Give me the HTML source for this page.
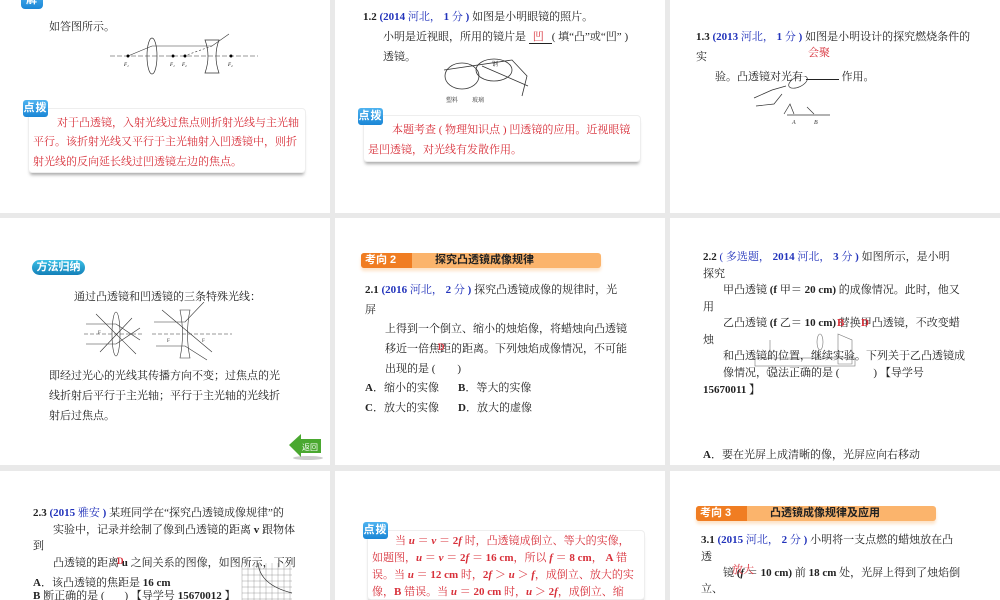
<!DOCTYPE html>
<html style="overflow:hidden;height:600px"><head><meta charset="utf-8"><style>
body{margin:0;width:1000px;height:600px;background:#e9e9e9;position:relative;overflow:hidden;font-family:"Liberation Serif","Noto Serif CJK SC",serif;color:#222}
.p{position:absolute;background:#fff;overflow:hidden}
.t{position:absolute;font-size:11px;line-height:13px;white-space:nowrap}
.b{color:#2233bb}
.r{color:#d8303a}
.k{font-weight:bold}
.badge{position:absolute;background:linear-gradient(#4fb3f0,#1a86d6);color:#fff;font-family:"Liberation Sans","Noto Sans CJK SC",sans-serif;font-weight:bold;font-size:11px;line-height:17px;text-align:center;border-radius:3px;letter-spacing:1px}
.box{position:absolute;border:1px solid #eee;border-radius:4px;background:#fff;box-shadow:0 4px 3px -2px #aaa}
.hd{position:absolute;height:15px;background:#fbb46c;border-radius:3px;box-shadow:0 3px 3px #fde3c8}
.hd .l{position:absolute;left:0;top:0;width:51px;height:15px;background:#f07d22;border-radius:3px 0 0 3px;color:#fff;font:bold 11px/15px "Liberation Sans","Noto Sans CJK SC",sans-serif;padding-left:4px;box-sizing:border-box}
.hd .c{position:absolute;top:0;font:bold 11px/15px "Liberation Sans","Noto Sans CJK SC",sans-serif;color:#222}
</style></head><body>
<div class="p" style="left:0;top:0;width:330px;height:213px"></div>
<div class="p" style="left:335px;top:0;width:330px;height:213px"></div>
<div class="p" style="left:670px;top:0;width:330px;height:213px"></div>
<div class="p" style="left:0;top:218px;width:330px;height:247px"></div>
<div class="p" style="left:335px;top:218px;width:330px;height:247px"></div>
<div class="p" style="left:670px;top:218px;width:330px;height:247px"></div>
<div class="p" style="left:0;top:471px;width:330px;height:129px"></div>
<div class="p" style="left:335px;top:471px;width:330px;height:129px"></div>
<div class="p" style="left:670px;top:471px;width:330px;height:129px"></div>

<!-- Panel 1 -->
<div class="badge" style="left:21px;top:-8px;width:22px;height:17px;border-radius:4px">解</div>
<div class="t" style="left:49px;top:21px">如答图所示。</div>
<svg style="position:absolute;left:108px;top:32px" width="152" height="44">
<line x1="2" y1="24" x2="150" y2="24" stroke="#333" stroke-width=".6" stroke-dasharray="5,2"/>
<ellipse cx="44" cy="24" rx="5" ry="18" fill="none" stroke="#333" stroke-width=".7"/>
<path d="M97 8 h14 q-6 16 0 33 h-14 q6-17 0-33z" fill="none" stroke="#333" stroke-width=".7"/>
<path d="M20 24 L44 14 L104 14 L121 2" fill="none" stroke="#333" stroke-width=".6"/>
<line x1="76" y1="24" x2="104" y2="14" stroke="#333" stroke-width=".6" stroke-dasharray="2,2"/>
<circle cx="20" cy="24" r="1.5"/><circle cx="65" cy="24" r="1.5"/><circle cx="77" cy="24" r="1.5"/><circle cx="123" cy="24" r="1.5"/>
<text x="16" y="34" font-size="5" font-style="italic">F₁</text><text x="62" y="34" font-size="5" font-style="italic">F₁</text><text x="74" y="34" font-size="5" font-style="italic">F₂</text><text x="120" y="34" font-size="5" font-style="italic">F₂</text>
</svg>
<div class="box" style="left:28px;top:108px;width:276px;height:63px"></div>
<div class="badge" style="left:23px;top:100px;width:25px">点拨</div>
<div class="t r" style="left:57px;top:117px">对于凸透镜，入射光线过焦点则折射光线与主光轴</div>
<div class="t r" style="left:33px;top:136px">平行。该折射光线又平行于主光轴射入凹透镜中，则折</div>
<div class="t r" style="left:33px;top:156px">射光线的反向延长线过凹透镜左边的焦点。</div>

<!-- Panel 2 -->
<div class="t" style="left:363px;top:11px"><span class="k">1.2</span> <span class="b k">(2014</span> <span class="b">河北，</span> <span class="b k">1</span> <span class="b">分</span> <span class="b k">)</span> 如图是小明眼镜的照片。</div>
<div class="t" style="left:383px;top:31px">小明是近视眼，所用的镜片是 <span class="r" style="border-bottom:1px solid #222;padding:0 8px 0 4px">凹</span>( 填“凸”或“凹” )</div>
<div class="t" style="left:383px;top:51px">透镜。</div>
<svg style="position:absolute;left:442px;top:56px" width="88" height="50" stroke="#333" fill="none" stroke-width=".8">
<ellipse cx="20" cy="20" rx="17" ry="13"/><ellipse cx="52" cy="14" rx="18" ry="11"/>
<path d="M2 14 L70 4 L85 20 L80 40 M40 10 L86 30"/>
<text x="50" y="10" font-size="6" fill="#333" stroke="none">钢</text>
<text x="4" y="46" font-size="6" fill="#333" stroke="none">塑料</text><text x="30" y="46" font-size="6" fill="#333" stroke="none">玻璃</text>
</svg>
<div class="box" style="left:363px;top:115px;width:276px;height:45px"></div>
<div class="badge" style="left:358px;top:108px;width:25px">点拨</div>
<div class="t r" style="left:392px;top:124px">本题考查 ( 物理知识点 ) 凹透镜的应用。近视眼镜</div>
<div class="t r" style="left:368px;top:144px">是凹透镜，对光线有发散作用。</div>

<!-- Panel 3 -->
<div class="t" style="left:696px;top:31px"><span class="k">1.3</span> <span class="b k">(2013</span> <span class="b">河北，</span> <span class="b k">1</span> <span class="b">分</span> <span class="b k">)</span> 如图是小明设计的探究燃烧条件的</div>
<div class="t" style="left:696px;top:51px">实</div>
<div class="t r" style="left:808px;top:47px">会聚</div>
<div class="t" style="left:715px;top:71px">验。凸透镜对光有 <span style="display:inline-block;width:33px;border-bottom:1px solid #222"></span> 作用。</div>
<svg style="position:absolute;left:752px;top:76px" width="82" height="50" stroke="#333" fill="none" stroke-width=".7">
<ellipse cx="46" cy="6" rx="10" ry="5" transform="rotate(-25 46 6)"/><path d="M2 22 L20 14 L34 10 M4 30 L22 28 L30 18"/>
<path d="M32 38 L38 28 L42 38 M55 31 L62 38"/><line x1="35" y1="39" x2="78" y2="39"/>
<text x="40" y="48" font-size="6" fill="#333" stroke="none" font-style="italic">A</text><text x="62" y="48" font-size="6" fill="#333" stroke="none" font-style="italic">B</text>
</svg>

<!-- Panel 4 -->
<div class="badge" style="left:32px;top:260px;width:53px;height:15px;line-height:15px;border-radius:8px;background:linear-gradient(#3cc0e6,#1380b8);letter-spacing:0">方法归纳</div>
<div class="t" style="left:74px;top:291px">通过凸透镜和凹透镜的三条特殊光线：</div>
<svg style="position:absolute;left:82px;top:302px" width="150" height="60" stroke="#333" fill="none" stroke-width=".6">
<line x1="2" y1="32" x2="62" y2="32" stroke-dasharray="4,2"/><ellipse cx="34" cy="32" rx="4" ry="22"/>
<path d="M4 22 L34 22 L58 38 M4 42 L34 42 L58 26 M14 12 L54 52 M18 50 L50 16"/>
<line x1="70" y1="32" x2="150" y2="32" stroke-dasharray="4,2"/><path d="M98 8 h10 q-5 24 0 48 h-10 q5-24 0-48z"/>
<path d="M72 20 L103 20 L122 0 M74 44 L103 44 L125 58 M80 8 L130 50"/>
<text x="16" y="32" font-size="5" fill="#333" stroke="none">F</text><text x="85" y="40" font-size="5" fill="#333" stroke="none">F</text><text x="120" y="40" font-size="5" fill="#333" stroke="none">F</text>
</svg>
<div class="t" style="left:49px;top:370px">即经过光心的光线其传播方向不变；过焦点的光</div>
<div class="t" style="left:49px;top:390px">线折射后平行于主光轴；平行于主光轴的光线折</div>
<div class="t" style="left:49px;top:410px">射后过焦点。</div>
<svg style="position:absolute;left:288px;top:432px" width="36" height="28">
<ellipse cx="20" cy="26" rx="15" ry="2" fill="#ccc"/>
<path d="M1 13 L13 2 L13 7 L33 7 L33 21 L13 21 L13 25 Z" fill="#4aa830"/>
<text x="14" y="18" font-size="8" fill="#fff" font-family="Noto Sans CJK SC,sans-serif">返回</text>
</svg>

<!-- Panel 5 -->
<div class="hd" style="left:361px;top:253px;width:240px"><div class="l">考向 2</div><div class="c" style="left:74px">探究凸透镜成像规律</div></div>
<div class="t" style="left:365px;top:284px"><span class="k">2.1</span> <span class="b k">(2016</span> <span class="b">河北，</span> <span class="b k">2</span> <span class="b">分</span> <span class="b k">)</span> 探究凸透镜成像的规律时，光</div>
<div class="t" style="left:365px;top:304px">屏</div>
<div class="t" style="left:385px;top:323px">上得到一个倒立、缩小的烛焰像，将蜡烛向凸透镜</div>
<div class="t" style="left:385px;top:343px">移近一倍焦距的距离。下列烛焰成像情况，不可能</div>
<div class="t r k" style="left:438px;top:341px;font-size:9px">D</div>
<div class="t" style="left:385px;top:363px">出现的是 (<span style="display:inline-block;width:22px"></span>)</div>
<div class="t" style="left:365px;top:382px"><span class="k">A</span>．缩小的实像</div>
<div class="t" style="left:458px;top:382px"><span class="k">B</span>．等大的实像</div>
<div class="t" style="left:365px;top:402px"><span class="k">C</span>．放大的实像</div>
<div class="t" style="left:458px;top:402px"><span class="k">D</span>．放大的虚像</div>

<!-- Panel 6 -->
<div class="t" style="left:703px;top:251px"><span class="k">2.2</span> <span class="b">( 多选题，</span> <span class="b k">2014</span> <span class="b">河北，</span> <span class="b k">3</span> <span class="b">分</span> <span class="b k">)</span> 如图所示，是小明</div>
<div class="t" style="left:703px;top:268px">探究</div>
<div class="t" style="left:723px;top:284px">甲凸透镜 <span class="k">(f</span> 甲<span class="k">＝ 20 cm)</span> 的成像情况。此时，他又</div>
<div class="t" style="left:703px;top:301px">用</div>
<div class="t" style="left:723px;top:317px">乙凸透镜 <span class="k">(f</span> 乙<span class="k">＝ 10 cm)</span> 替换甲凸透镜，不改变蜡</div>
<div class="t r k" style="left:837px;top:317px">B</div><div class="t r k" style="left:861px;top:317px">D</div>
<div class="t" style="left:703px;top:334px">烛</div>
<svg style="position:absolute;left:750px;top:330px" width="110" height="50" stroke="#777" fill="none" stroke-width=".6">
<rect x="5" y="28" width="100" height="8"/><ellipse cx="70" cy="12" rx="3" ry="8"/><path d="M88 4 L102 10 L102 34 L88 34Z"/><path d="M20 10 L20 28"/><circle cx="22" cy="42" r="5"/>
</svg>
<div class="t" style="left:723px;top:350px">和凸透镜的位置，继续实验。下列关于乙凸透镜成</div>
<div class="t" style="left:723px;top:367px">像情况，说法正确的是 (<span style="display:inline-block;width:34px"></span>) 【导学号</div>
<div class="t k" style="left:703px;top:384px">15670011 】</div>
<div class="t" style="left:703px;top:449px"><span class="k">A</span>．要在光屏上成清晰的像，光屏应向右移动</div>

<!-- Panel 7 -->
<div class="t" style="left:33px;top:507px"><span class="k">2.3</span> <span class="b k">(2015</span> <span class="b">雅安</span> <span class="b k">)</span> 某班同学在“探究凸透镜成像规律”的</div>
<div class="t" style="left:53px;top:524px">实验中，记录并绘制了像到凸透镜的距离 <span class="k">v</span> 跟物体</div>
<div class="t" style="left:33px;top:540px">到</div>
<div class="t" style="left:53px;top:557px">凸透镜的距离 <span class="k">u</span> 之间关系的图像，如图所示，下列</div>
<div class="t r k" style="left:117px;top:555px;font-size:9px">D</div>
<div class="t" style="left:33px;top:577px"><span class="k">A</span>．该凸透镜的焦距是 <span class="k">16 cm</span></div>
<div class="t" style="left:33px;top:590px"><span class="k">B</span>  断正确的是 (<span style="display:inline-block;width:20px"></span>) 【导学号 <span class="k">15670012</span> 】</div>
<svg style="position:absolute;left:238px;top:563px" width="56" height="37" stroke="#888" fill="none" stroke-width=".4">
<path d="M4 0 V37 M10 0 V37 M16 0 V37 M22 0 V37 M28 0 V37 M34 0 V37 M40 0 V37 M46 0 V37 M52 0 V37 M4 6 H54 M4 12 H54 M4 18 H54 M4 24 H54 M4 30 H54 M4 36 H54"/>
<path d="M20 0 Q22 22 54 30" stroke="#333" stroke-width=".7"/>
</svg>

<!-- Panel 8 -->
<div class="box" style="left:367px;top:530px;width:276px;height:68px"></div>
<div class="badge" style="left:363px;top:522px;width:25px">点拨</div>
<div class="t r" style="left:395px;top:535px">当 <b><i>u</i> ＝ <i>v</i> ＝ 2<i>f</i></b> 时，凸透镜成倒立、等大的实像，</div>
<div class="t r" style="left:372px;top:552px">如题图，<b><i>u</i> ＝ <i>v</i> ＝ 2<i>f</i> ＝ 16 cm</b>，所以 <b><i>f</i> ＝ 8 cm</b>， <b>A</b> 错</div>
<div class="t r" style="left:372px;top:569px">误。当 <b><i>u</i> ＝ 12 cm</b> 时，<b>2<i>f</i> ＞ <i>u</i> ＞ <i>f</i></b>，成倒立、放大的实</div>
<div class="t r" style="left:372px;top:586px">像，<b>B</b> 错误。当 <b><i>u</i> ＝ 20 cm</b> 时，<b><i>u</i> ＞ 2<i>f</i></b>，成倒立、缩</div>

<!-- Panel 9 -->
<div class="hd" style="left:696px;top:506px;width:240px"><div class="l">考向 3</div><div class="c" style="left:74px">凸透镜成像规律及应用</div></div>
<div class="t" style="left:701px;top:534px"><span class="k">3.1</span> <span class="b k">(2015</span> <span class="b">河北，</span> <span class="b k">2</span> <span class="b">分</span> <span class="b k">)</span> 小明将一支点燃的蜡烛放在凸</div>
<div class="t" style="left:701px;top:551px">透</div>
<div class="t" style="left:723px;top:567px">镜 <span class="k">(<i>f</i> ＝ 10 cm)</span> 前 <span class="k">18 cm</span> 处，光屏上得到了烛焰倒</div>
<div class="t r" style="left:732px;top:564px">放大</div>
<div class="t" style="left:701px;top:583px">立、</div>
</body></html>
